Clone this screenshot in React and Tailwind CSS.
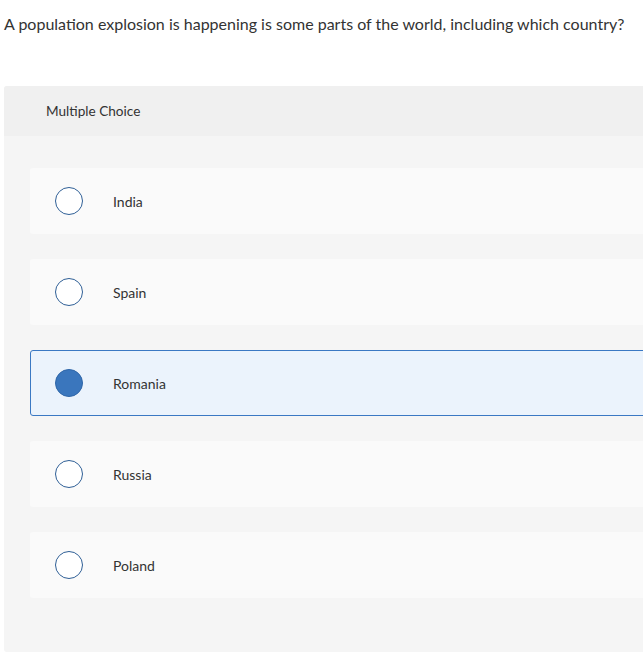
export default function App() {
  const options = ["India", "Spain", "Romania", "Russia", "Poland"];
  const selected = "Romania";
  return (
    <div className="w-[643px] h-[655px] overflow-hidden bg-white" style={{ fontFamily: "Lato, 'Open Sans', sans-serif" }}>
      <div className="pl-[4px] pt-[13px] text-[16px] leading-[22px] text-[#333] whitespace-nowrap">
        A population explosion is happening is some parts of the world, including which country?
      </div>
      <div className="ml-[4px] mt-[51px] w-[660px] rounded-[3px] bg-[#f5f5f5] h-[566px]">
        <div className="h-[50px] flex items-center pl-[42px] bg-[#f0f0f0] rounded-t-[3px] text-[13.6px] text-[#333]">
          Multiple Choice
        </div>
        <div className="pt-[32px] pl-[26px] flex flex-col gap-[25px]">
          {options.map((o) => {
            const sel = o === selected;
            return (
              <div
                key={o}
                className={
                  sel
                    ? "h-[66px] flex items-center rounded-[3px] border border-[#3a78c3] bg-[#ebf3fc] pl-[24px]"
                    : "h-[66px] flex items-center rounded-[3px] border border-transparent bg-[#fafafa] pl-[24px]"
                }
              >
                <div
                  className={
                    sel
                      ? "w-[28px] h-[28px] rounded-full border-[1.5px] border-[#2f66a8] bg-[#3a76bd]"
                      : "w-[28px] h-[28px] rounded-full border-[1.5px] border-[#2f5f96] bg-white"
                  }
                />
                <div className="ml-[30px] text-[14px] text-[#333]">{o}</div>
              </div>
            );
          })}
        </div>
      </div>
    </div>
  );
}
